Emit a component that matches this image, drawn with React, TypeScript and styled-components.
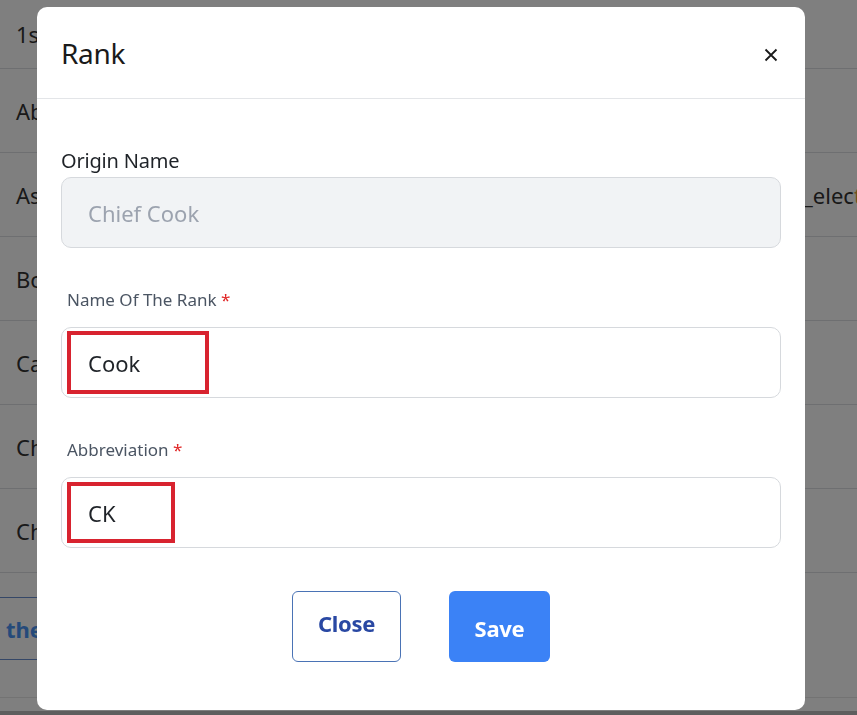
import { FC } from 'react';
import styled, { createGlobalStyle } from 'styled-components';

const GlobalStyle = createGlobalStyle`
	* { box-sizing: border-box; }
	html, body {
		margin: 0;
		padding: 0;
		background: #ffffff;
		font-family: 'Noto Sans', 'Open Sans', sans-serif;
		overflow: hidden;
	}
`;

const rows = [
	{ name: '1st Engineer', code: '' },
	{ name: 'Able Seaman', code: '' },
	{ name: 'Assistant Electrician', code: 'Asst_elec' },
	{ name: 'Bosun', code: '' },
	{ name: 'Captain', code: '' },
	{ name: 'Chief Officer', code: '' },
	{ name: 'Chief Engineer', code: '' },
];

const App: FC = () => {
	return (
		<>
			<GlobalStyle />
			<Page>
				<Table>
					{rows.map((row, i) => (
						<Row key={row.name} first={i === 0}>
							<NameCell>{row.name}</NameCell>
							<CodeCell>
								{row.code}
								{row.code && <Accent>t</Accent>}
							</CodeCell>
						</Row>
					))}
				</Table>
				<Pager>
					<PagerLink>the</PagerLink>
				</Pager>
				<Footer />
				<ScrollStrip />
			</Page>

			<Overlay>
				<Modal>
					<Header>
						<Title>Rank</Title>
						<CloseIcon aria-label='close'>
							<svg width='14' height='14' viewBox='0 0 14 14'>
								<path d='M1.5 1.5 L12.5 12.5 M12.5 1.5 L1.5 12.5' stroke='#1a1a1a' strokeWidth='1.8' />
							</svg>
						</CloseIcon>
					</Header>
					<Body>
						<Field>
							<OriginLabel>Origin Name</OriginLabel>
							<Input disabled>Chief Cook</Input>
						</Field>
						<Field spaced>
							<Label>
								Name Of The Rank <Star>*</Star>
							</Label>
							<Input>
								Cook
								<Mark style={{ width: 142, height: 63, top: 3 }} />
							</Input>
						</Field>
						<Field spaced>
							<Label>
								Abbreviation <Star>*</Star>
							</Label>
							<Input>
								CK
								<Mark style={{ width: 108, height: 61, top: 4 }} />
							</Input>
						</Field>
						<Actions>
							<Button variant='outline'>Close</Button>
							<Button variant='primary'>Save</Button>
						</Actions>
					</Body>
				</Modal>
			</Overlay>
		</>
	);
};

const Page = styled.div`
	height: 715px;
	display: flex;
	flex-direction: column;
	color: #333;
`;

const Table = styled.div`
	display: flex;
	flex-direction: column;
`;

const Row = styled.div<{ first?: boolean }>`
	height: ${(p) => (p.first ? 69 : 84)}px;
	display: grid;
	grid-template-columns: 760px 1fr;
	align-items: center;
	border-bottom: 1px solid #dcdfe3;
	font-size: 22px;
`;

const NameCell = styled.div`
	padding-left: 16px;
	white-space: nowrap;
	overflow: hidden;
`;

const CodeCell = styled.div`
	white-space: nowrap;
	overflow: hidden;
`;

const Accent = styled.span`
	color: #e0a23a;
`;

const Pager = styled.div`
	margin-top: 24px;
	height: 63px;
	display: flex;
	align-items: center;
	border-top: 1px solid #6a8fcf;
	border-bottom: 1px solid #6a8fcf;
	width: 120px;
`;

const PagerLink = styled.span`
	padding-left: 6px;
	font-size: 22px;
	font-weight: 700;
	color: #4a94f4;
`;

const Footer = styled.div`
	flex: 1;
	border-top: 1px solid #e6e6e6;
	margin-top: 37px;
`;

const ScrollStrip = styled.div`
	height: 4px;
	background: #bcbcbc;
`;

const Overlay = styled.div`
	position: fixed;
	inset: 0;
	background: rgba(0, 0, 0, 0.5);
`;

const Modal = styled.div`
	margin: 7px 0 0 37px;
	width: 768px;
	height: 703px;
	background: #ffffff;
	border-radius: 10px;
	display: flex;
	flex-direction: column;
`;

const Header = styled.div`
	height: 92px;
	flex-shrink: 0;
	display: flex;
	align-items: center;
	justify-content: space-between;
	padding: 0 27px 0 24px;
	border-bottom: 1px solid #e3e5e8;
`;

const Title = styled.h2`
	margin: 0;
	font-size: 28px;
	font-weight: 400;
	color: #1a1a1a;
	letter-spacing: -0.3px;
`;

const CloseIcon = styled.span`
	display: flex;
	align-items: center;
	justify-content: center;
	width: 14px;
	height: 14px;
	margin-top: 4px;
`;

const Body = styled.div`
	padding: 48px 24px 48px;
	display: flex;
	flex-direction: column;
`;

const Field = styled.div<{ spaced?: boolean }>`
	display: flex;
	flex-direction: column;
	margin-top: ${(p) => (p.spaced ? 40 : 0)}px;
`;

const OriginLabel = styled.label`
	font-size: 20px;
	line-height: 28px;
	color: #1f2328;
	margin-bottom: 2px;
	letter-spacing: -0.2px;
`;

const Label = styled.label`
	font-size: 17px;
	line-height: 24px;
	color: #4b5563;
	padding-left: 6px;
	margin-bottom: 15px;
`;

const Star = styled.span`
	color: #e02424;
`;

const Input = styled.div<{ disabled?: boolean }>`
	position: relative;
	height: 71px;
	display: flex;
	align-items: center;
	padding-left: 26px;
	font-size: 22px;
	color: ${(p) => (p.disabled ? '#9ca3af' : '#1f2328')};
	background: ${(p) => (p.disabled ? '#f1f3f5' : '#ffffff')};
	border: 1px solid #d6d9dd;
	border-radius: 10px;
`;

const Mark = styled.span`
	position: absolute;
	left: 5px;
	border: 4px solid #d8232f;
`;

const Actions = styled.div`
	margin-top: 43px;
	display: flex;
	justify-content: center;
	gap: 48px;
`;

const Button = styled.button<{ variant: 'outline' | 'primary' }>`
	height: 71px;
	border-radius: 6px;
	font-family: inherit;
	font-size: 22px;
	font-weight: 700;
	letter-spacing: -0.3px;
	cursor: pointer;
	${(p) =>
		p.variant === 'outline'
			? `
		width: 109px;
		background: #ffffff;
		border: 1px solid #4a73b5;
		color: #2948a3;
		padding: 0 0 8px;
	`
			: `
		width: 101px;
		background: #3b82f6;
		border: none;
		color: #ffffff;
		padding: 3px 0 0;
	`}
`;

export default App;
